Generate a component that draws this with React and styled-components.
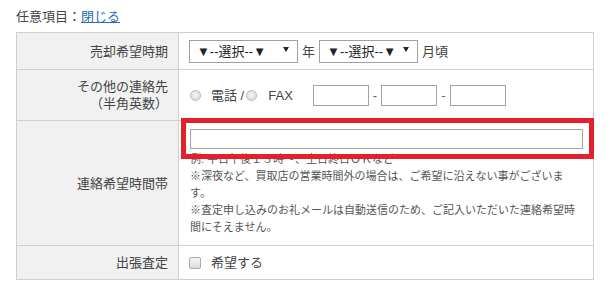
import React from "react";
import styled, { createGlobalStyle } from "styled-components";

const GlobalStyle = createGlobalStyle`
  html, body {
    margin: 0;
    padding: 0;
    background: #fff;
  }
  body {
    font-family: "Liberation Sans", "Noto Sans CJK JP", sans-serif;
    color: #444;
  }
`;

const Page = styled.div`
  padding: 8px 16px;
  width: 578px;
`;

const Heading = styled.div`
  font-size: 13px;
  line-height: 18px;
  margin-bottom: 6px;
  color: #444;
  a {
    color: #2a6bb8;
    text-decoration: underline;
  }
`;

const Table = styled.table`
  width: 578px;
  border-collapse: collapse;
  font-size: 13px;
  line-height: 17px;
`;

const Label = styled.th`
  width: 151px;
  padding: 8px 10px 8px 0;
  background: #f1f1f1;
  border: 1px solid #cfcfcf;
  text-align: right;
  font-weight: normal;
  color: #444;
  vertical-align: middle;
`;

const Cell = styled.td`
  padding: ${(p) => p.$pad || "7px 10px"};
  border: 1px solid #cfcfcf;
  vertical-align: middle;
`;

const Line = styled.div`
  display: flex;
  align-items: center;
  gap: ${(p) => p.$gap ?? 5}px;
`;

const SelectWrap = styled.span`
  position: relative;
  display: inline-block;
  &::after {
    content: "";
    position: absolute;
    right: 9px;
    top: 7px;
    border-left: 3px solid transparent;
    border-right: 3px solid transparent;
    border-top: 5px solid #222;
    pointer-events: none;
  }
`;

const Select = styled.select`
  appearance: none;
  display: block;
  width: ${(p) => p.$w}px;
  height: 23px;
  border: 1px solid #a0a0a0;
  border-radius: 0;
  background: #fff;
  padding: 0 0 0 7px;
  margin: 0;
  font-family: "Liberation Sans", "Noto Sans CJK JP", sans-serif;
  font-size: 13px;
  color: #222;
`;

const Radio = styled.span`
  display: inline-block;
  width: 9px;
  height: 9px;
  border-radius: 50%;
  border: 1px solid #b9b9b9;
  background: radial-gradient(circle at 50% 40%, #f4f4f4, #d6d6d6);
  margin-left: ${(p) => p.$ml || 0}px;
  margin-right: ${(p) => p.$mr || 10}px;
  flex: none;
`;

const Check = styled.span`
  display: inline-block;
  width: 10px;
  height: 10px;
  border-radius: 2px;
  border: 1px solid #a9a9a9;
  background: linear-gradient(#f6f6f6, #dcdcdc);
  margin-right: 10px;
  flex: none;
`;

const TextBox = styled.input`
  box-sizing: border-box;
  width: ${(p) => (p.$w ? `${p.$w}px` : "100%")};
  height: ${(p) => p.$h || 21}px;
  border: 1px solid #a3a3a3;
  border-radius: 0;
  padding: 0 4px;
  margin: 0;
  background: #fff;
  display: block;
  flex: none;
`;

const Plain = styled.span`
  margin-right: ${(p) => p.$mr || 0}px;
`;

const Dash = styled.span`
  margin: 0 4px;
  color: #666;
`;

const Field = styled.div`
  position: relative;
`;

const Highlight = styled.div`
  position: absolute;
  left: -9px;
  right: -11px;
  top: -11px;
  bottom: -10px;
  border: 5px solid #e3202b;
  pointer-events: none;
`;

const Notes = styled.div`
  margin-top: 2px;
  font-size: 11px;
  line-height: 17px;
  color: #555;
  width: 392px;
`;

export default function App() {
  return (
    <Page>
      <GlobalStyle />
      <Heading>
        任意項目：<a href="#close">閉じる</a>
      </Heading>
      <Table>
        <tbody>
          <tr>
            <Label>売却希望時期</Label>
            <Cell $pad="7px 10px 6px">
              <Line $gap={4}>
                <SelectWrap>
                  <Select $w={109}>
                    <option>▼--選択--▼</option>
                  </Select>
                </SelectWrap>
                <span>年</span>
                <SelectWrap>
                  <Select $w={99}>
                    <option>▼--選択--▼</option>
                  </Select>
                </SelectWrap>
                <span>月頃</span>
              </Line>
            </Cell>
          </tr>
          <tr>
            <Label>
              その他の連絡先
              <br />
              （半角英数）
            </Label>
            <Cell $pad="7px 10px 7px 11px">
              <Line $gap={0}>
                <Radio />
                <Plain>電話 /</Plain>
                <Radio $ml={2} $mr={11} />
                <Plain $mr={20}>FAX</Plain>
                <TextBox $w={56} />
                <Dash>-</Dash>
                <TextBox $w={56} />
                <Dash>-</Dash>
                <TextBox $w={56} />
              </Line>
            </Cell>
          </tr>
          <tr>
            <Label>連絡希望時間帯</Label>
            <Cell $pad="8px 10px 9px 11px">
              <Field>
                <TextBox $h={20} />
                <Highlight />
              </Field>
              <Notes>
                例: 平日午後１３時～、土日終日ＯＫなど
                <br />
                ※深夜など、買取店の営業時間外の場合は、ご希望に沿えない事がございます。
                <br />
                ※査定申し込みのお礼メールは自動送信のため、ご記入いただいた連絡希望時間にそえません。
              </Notes>
            </Cell>
          </tr>
          <tr>
            <Label>出張査定</Label>
            <Cell $pad="7px 10px">
              <Line $gap={0}>
                <Check />
                <span>希望する</span>
              </Line>
            </Cell>
          </tr>
        </tbody>
      </Table>
    </Page>
  );
}
